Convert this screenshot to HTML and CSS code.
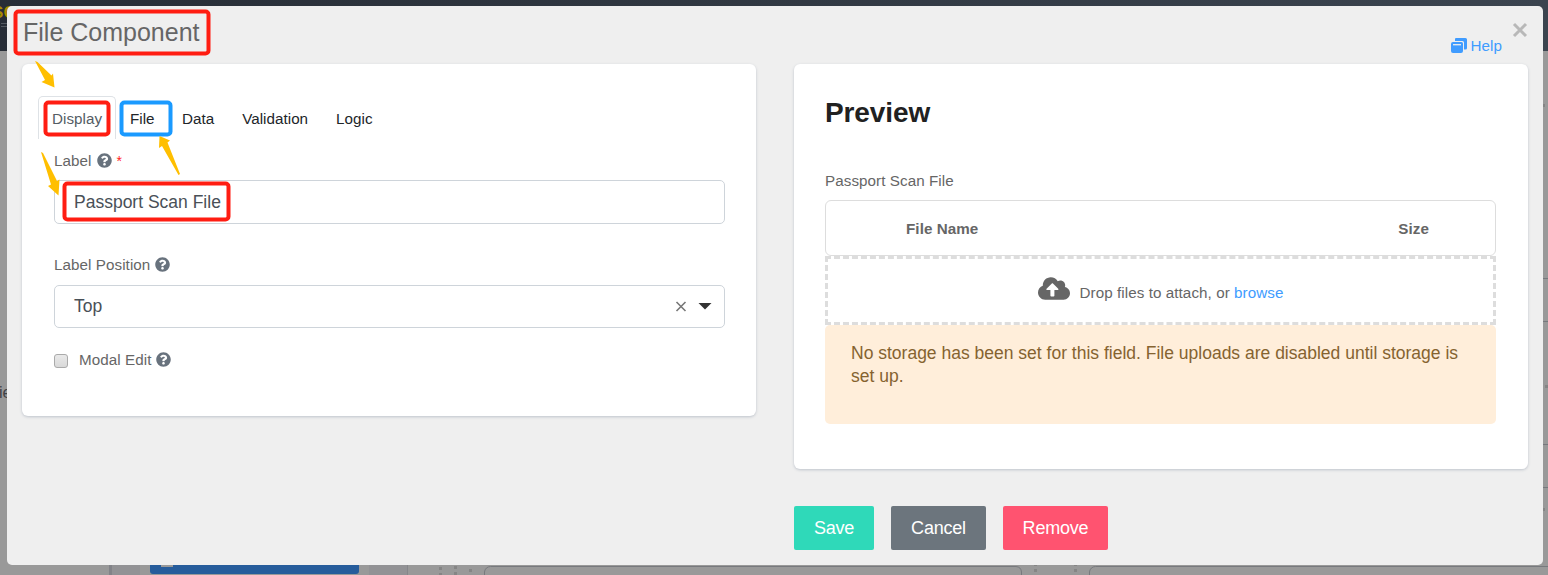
FILE: index.html
```html
<!DOCTYPE html>
<html lang="en">
<head>
<meta charset="utf-8">
<title>File Component</title>
<link rel="stylesheet" href="styles.css">
</head>
<body>
<svg class="backdrop" width="1548" height="575" viewBox="0 0 1548 575" aria-hidden="true">
  <defs><linearGradient id="bar"><stop offset="0" stop-color="#272d36"/><stop offset="1" stop-color="#3b444f"/></linearGradient></defs>
  <rect width="1548" height="575" fill="#999"/>
  <rect width="1548" height="51" fill="url(#bar)"/>
  <text x="-8" y="18" class="brand">SC</text>
  <path d="M1 23.5h6M1 26.5h6" stroke="#555b62"/>
  <text x="-1" y="398" class="behind">ie</text>
  <rect x="109" y="565" width="31" height="10" fill="#929295"/><rect x="109" y="565" width="3" height="10" fill="#828388"/>
  <path d="M150 560H359V571a3 3 0 0 1-3 3H153a3 3 0 0 1-3-3z" fill="#265c9b"/>
  <rect x="161" y="565" width="12" height="2" fill="#999"/>
  <rect x="369" y="565" width="38" height="10" fill="#929295"/><path d="M407.500 565v10" stroke="#85868a"/>
  <path d="M439 567h3v3h-3zM439 573h3v2h-3zM454 566h3v3h-3zM454 572h3v3h-3zM469 569h3v3h-3zM1034 565h3v1h-3zM1034 569h3v3h-3zM1074 565h3v1h-3zM1074 569h3v3h-3zM1545 385h3v3h-3zM1543 508h2v3h-2zM1543 104h2v3h-2z" fill="#858585"/>
  <path d="M484.500 575v-3a6 6 0 0 1 6-5.500H1016a6 6 0 0 1 5.500 5.500v3M1089.500 575v-3a6 6 0 0 1 6-5.500H1548M1543 278.500h5M1543 321.500h5M1543 444.500h5M1543 487.500h5" fill="none" stroke="#77797d"/>
</svg>
<svg class="symbols" width="0" height="0" aria-hidden="true">
  <symbol id="question" viewBox="0 0 512 512"><path fill="currentColor" d="M504 256c0 136.997-111.043 248-248 248S8 392.997 8 256C8 119.083 119.043 8 256 8s248 111.083 248 248zM262.655 90c-54.497 0-89.255 22.957-116.549 63.758-3.536 5.286-2.353 12.415 2.715 16.258l34.699 26.310c5.205 3.947 12.621 3.008 16.665-2.122 17.864-22.658 30.113-35.797 57.303-35.797 20.429 0 45.698 13.148 45.698 32.958 0 14.976-12.363 22.667-32.534 33.976C247.128 238.528 216 254.941 216 296v4c0 6.627 5.373 12 12 12h56c6.627 0 12-5.373 12-12v-1.333c0-28.462 83.186-29.647 83.186-106.667 0-58.002-60.165-102-116.531-102zM256 338c-25.365 0-46 20.635-46 46 0 25.364 20.635 46 46 46s46-20.636 46-46c0-25.365-20.635-46-46-46z"/></symbol>
</svg>
<main class="modal">
  <header class="header">
    <h1 class="title">File Component</h1>
    <a class="help"><svg width="16" height="16" viewBox="0 0 16 16"><path d="M5 0h9.500q1.500 0 1.500 1.500V10q0 1.500-1.500 1.500H13V4.500Q13 3 11.500 3H4V1q0-1 1-1z" fill="#409cff"/><path d="M2 4h8.500Q12 4 12 5.500V13q0 2-2 2H2q-2 0-2-2V6q0-2 2-2z" fill="#409cff"/><path d="M2 6.700h8" stroke="#efefef" stroke-width="1.300"/></svg>Help</a>
    <button class="close" aria-label="Close"><svg width="16" height="16" viewBox="0 0 16 16"><path d="M2 2l12 12M14 2L2 14" stroke="#b8b8b8" stroke-width="3"/></svg></button>
  </header>
  <div class="columns">
    <section class="card settings">
      <nav class="tabs"><a class="tab active">Display</a><a class="tab file-tab">File</a><a class="tab">Data</a><a class="tab">Validation</a><a class="tab">Logic</a></nav>
      <div class="form">
        <div class="label">Label <svg class="q"><use href="#question"/></svg><span class="required">*</span></div>
        <div class="input">Passport Scan File</div>
        <div class="label position-label">Label Position <svg class="q"><use href="#question"/></svg></div>
        <div class="input select">Top
          <svg width="38" height="12" viewBox="0 0 38 12"><path d="M2.500 2l9 9M11.500 2l-9 9" stroke="#777" stroke-width="1.600"/><path d="M24.500 3h13l-6.500 6.500z" fill="#333"/></svg>
        </div>
        <div class="label check"><span class="checkbox"></span>Modal Edit <svg class="q"><use href="#question"/></svg></div>
      </div>
    </section>
    <div class="right">
      <section class="card preview">
        <h2 class="preview-title">Preview</h2>
        <div class="label">Passport Scan File</div>
        <div class="table-head"><b>File Name</b><b class="size">Size</b></div>
        <div class="drop">
          <svg width="32" height="23" viewBox="0 32 640 448"><path fill="#666" d="M537.600 226.600c4.100-10.700 6.400-22.400 6.400-34.600 0-53-43-96-96-96-19.700 0-38.100 6-53.300 16.200C367 64.200 315.300 32 256 32c-88.400 0-160 71.600-160 160 0 2.700.1 5.400.2 8.100C40.200 219.800 0 273.200 0 336c0 79.500 64.500 144 144 144h368c70.700 0 128-57.300 128-128 0-61.900-44-113.600-102.400-125.400zM393.400 288H328v112c0 8.800-7.200 16-16 16h-48c-8.800 0-16-7.200-16-16V288h-65.400c-14.300 0-21.400-17.200-11.300-27.300l105.400-105.400c6.200-6.200 16.400-6.200 22.600 0l105.400 105.400c10.100 10.100 2.900 27.300-11.300 27.300z"/></svg>
          <span>Drop files to attach, or <a>browse</a></span>
        </div>
        <div class="alert">No storage has been set for this field. File uploads are disabled until storage is<br>set up.</div>
      </section>
      <div class="actions"><button class="btn save">Save</button><button class="btn cancel">Cancel</button><button class="btn remove">Remove</button></div>
    </div>
  </div>
</main>
<svg class="annotations" width="1548" height="575" viewBox="0 0 1548 575" aria-hidden="true">
  <g fill="none" stroke="#ff1d12" stroke-width="4">
    <rect x="15.500" y="11.500" width="193" height="42" rx="3"/>
    <rect x="45.500" y="102.500" width="63" height="32" rx="3"/>
    <rect x="64.500" y="183.500" width="164" height="36" rx="3"/>
    <rect x="121.500" y="102.500" width="49" height="32" rx="3" stroke="#1a9aff"/>
  </g>
  <g fill="#ffbf00">
    <path d="M35 61L37.500 62L51.500 75.500L53 73.500L54.500 87.500L41.500 82L45 80z"/>
    <path d="M41 152L43 153L57 181L59.500 179.500L58.500 195.500L48 186L51 184.500z"/>
    <path d="M180 174L178.500 175L162 146L159 148L159.500 136L170 140.500L167.500 142.500z"/>
  </g>
</svg>
</body>
</html>
```
FILE: styles.css
```css
* { box-sizing: border-box; }
body { margin: 0; width: 1548px; height: 575px; overflow: hidden; position: relative; display: flow-root; font: 15.2px/20px "Liberation Sans", Arial, sans-serif; letter-spacing: .07px; color: #666; }
.backdrop, .annotations { position: absolute; left: 0; top: 0; pointer-events: none; }
.symbols { position: absolute; }
.brand { font: bold 17px "Liberation Sans", sans-serif; fill: #a88b00; }
.behind { font: 16px "Liberation Sans", sans-serif; fill: #3f4146; }
.modal { position: relative; margin: 6px 5px 0 7px; height: 559px; background: #efefef; border-radius: 5px; }
.header { height: 58px; display: flex; align-items: flex-start; padding: 0 15px 0 16px; }
.title { flex: 1; margin: 12px 0 0; font-size: 25px; line-height: 29px; font-weight: 400; letter-spacing: 0; }
.help { display: flex; align-items: center; gap: 4px; margin-top: 30px; color: #409cff; letter-spacing: .05px; }
.close { display: flex; border: 0; background: none; padding: 0; margin: 16px 0 0 10px; }
.columns { display: flex; align-items: flex-start; gap: 38px; padding: 0 15px; }
.card { width: 734px; background: #fff; border-radius: 6px; box-shadow: 0 1px 3px #bfc4cc; }
.settings { height: 352px; padding: 32px 31px 0 16px; }
.tabs { display: flex; height: 43px; color: #212529; }
.tab { padding: 12px 14px; line-height: 21px; letter-spacing: .03px; }
.active { border: 1px solid #dee2e6; border-bottom: 0; border-radius: 5px 5px 0 0; padding: 11px 13px; color: #555d65; width: 78px; }
.file-tab { width: 52px; }
.form { padding-left: 16px; }
.label { display: flex; align-items: center; gap: 5px; height: 20px; }
.form > .label:first-child { margin-top: 12px; }
.form .label { letter-spacing: .07px; }
.q { width: 15px; height: 15px; margin: 0 0 1px; color: #68727d; }
.required { color: #f22; font-size: 14px; }
.input { margin-top: 9px; height: 44px; border: 1px solid #ced4da; border-radius: 5px; padding: 0 12px 0 19px; display: flex; align-items: center; justify-content: space-between; font-size: 17.5px; letter-spacing: 0; color: #495057; }
.position-label { margin-top: 31px; }
.select { margin-top: 10px; height: 43px; padding-bottom: 1px; }
.check { margin-top: 22px; }
.checkbox { width: 14px; height: 14px; margin: 2px 6px 0 0; border: 1px solid #aaa; border-radius: 3px; background: linear-gradient(#e9e9e9, #d9d9d9); }
.preview { height: 405px; padding: 31px 32px 0 31px; }
.preview-title { margin: 0 0 40px; font-size: 28px; line-height: 36px; color: #212121; letter-spacing: -.1px; }
.preview .label { margin-bottom: 9px; }
.table-head { height: 56px; border: 1px solid #ddd; border-radius: 6px; display: flex; justify-content: space-between; align-items: center; padding: 2px 66px 0 80px; }
.drop { height: 69px; border: 3px dashed #ddd; display: flex; align-items: center; justify-content: center; gap: 10px; }
.drop svg { margin-bottom: 4px; }
.drop span { padding-top: 4px; }
.drop a { color: #409cff; }
.alert { height: 99px; padding: 17px 26px; border-radius: 5px; background: #ffeeda; color: #856330; font-size: 17.5px; line-height: 23px; letter-spacing: 0; white-space: nowrap; }
.actions { display: flex; gap: 17px; margin-top: 37px; }
.btn { height: 44px; border: 0; border-radius: 2px; padding: 0; color: #fff; font: 18px "Liberation Sans", sans-serif; letter-spacing: -.2px; }
.save { width: 80px; background: #2fd9b9; }
.cancel { width: 95px; background: #6c757d; }
.remove { width: 105px; background: #ff5370; }
```
